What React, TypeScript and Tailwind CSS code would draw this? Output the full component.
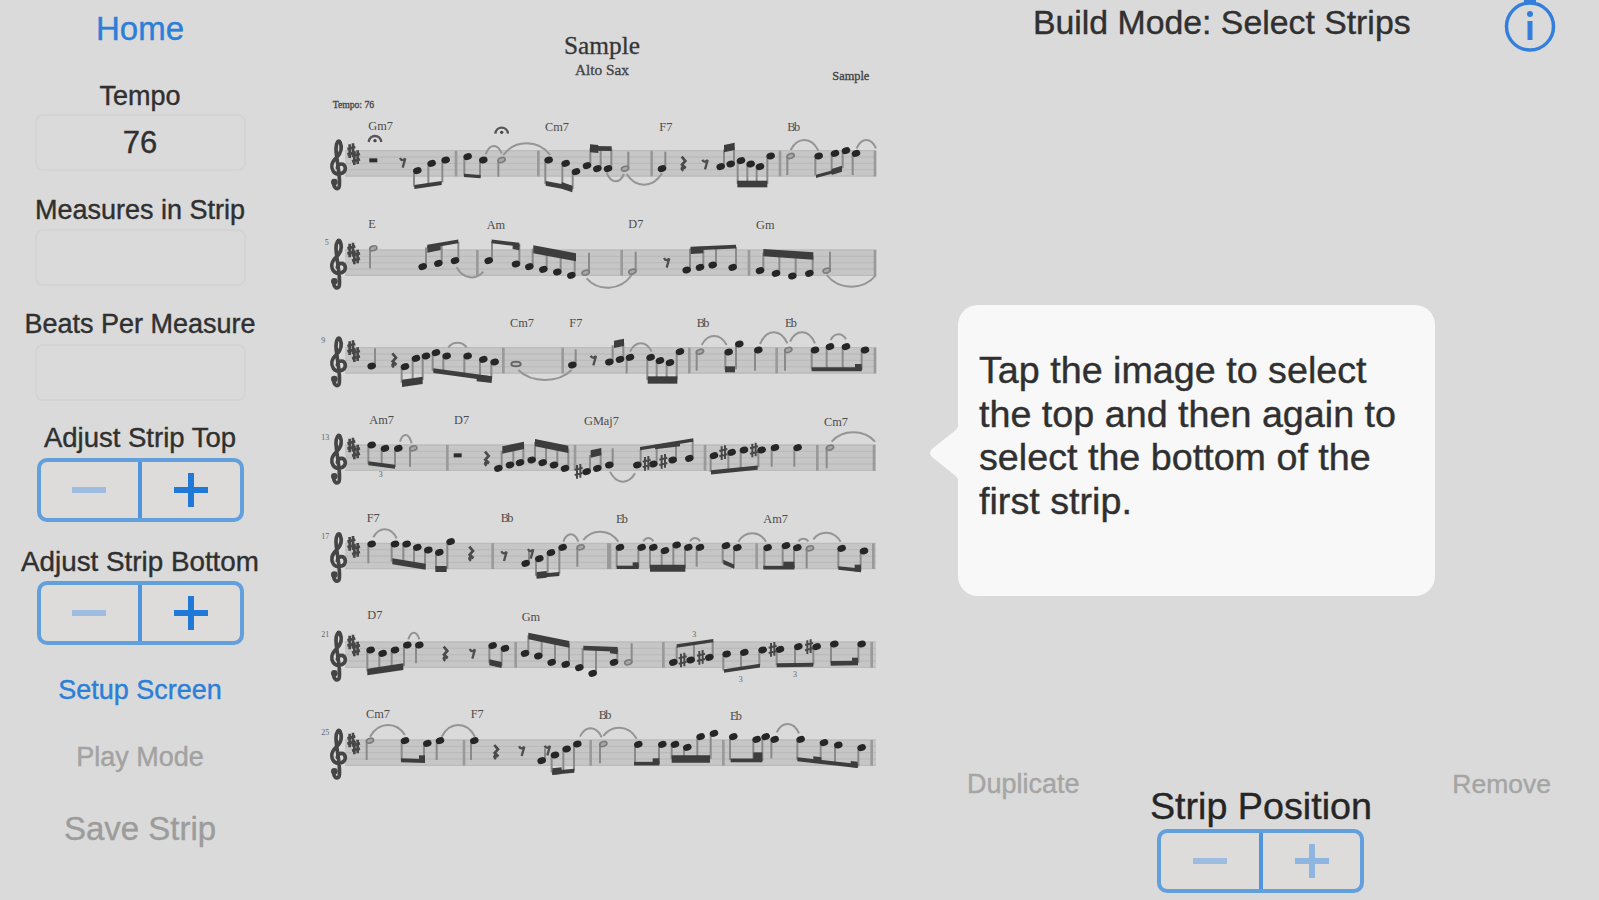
import clsx from "clsx"

type Note = [x: number, y: number]
type Beam = [x1: number, y1: number, x2: number, y2: number, weight: number]
type Tie = [x1: number, y1: number, x2: number, y2: number, peak: number]

interface Passage {
    x: number;
    y: number;
    groups?: { beam: Beam; notes: Note[] }[];
    extraBeams?: Beam[];
    quarters?: [x: number, y: number, stemTo: number][];
    halves?: [x: number, y: number, stemTo: number][];
    wholes?: Note[];
    ties?: Tie[];
    bars?: number[];
    quarterRests?: Note[];
    eighthRests?: Note[];
    wholeRests?: Note[];
    sharps?: Note[];
    fermatas?: Note[];
    triplets?: Note[];
    chords?: [x: number, y: number, name: string][];
}

// y of the top line of each staff
const staves = [392, 690, 983, 1275, 1570, 1866, 2160]

// two passages per staff, left half then right half
const passages: Passage[] = [
    {
        x: 0, y: 0,
        groups: [
            { beam: [283, 501, 365, 489, 12], notes: [[292, 452], [335, 430], [377, 420]] },
            { beam: [432, 466, 482, 470, 10], notes: [[443, 410], [490, 420]] },
            { beam: [677, 490, 757, 505, 14], notes: [[686, 420], [737, 430], [768, 455]] },
            { beam: [810, 385, 875, 386, 14], notes: [[801, 437], [832, 446], [864, 446]] },
        ],
        extraBeams: [[725, 496, 757, 507, 20], [810, 385, 835, 387, 24]],
        halves: [[545, 420, 470]],
        ties: [[497, 403, 545, 400, 378], [550, 405, 690, 405, 370]],
        bars: [408, 655],
        wholeRests: [[160, 421]],
        eighthRests: [[248, 425]],
        fermatas: [[165, 362], [545, 337]],
        chords: [[145, 330, "Gm7"], [675, 332, "Cm7"]],
    },
    {
        x: 840, y: 0,
        groups: [
            { beam: [372, 386, 404, 379, 22], notes: [[362, 440], [392, 432]] },
            { beam: [412, 492, 502, 492, 20], notes: [[423, 422], [452, 432], [480, 440], [512, 408]] },
            { beam: [648, 469, 726, 448, 10], notes: [[656, 408], [705, 400], [738, 392]] },
        ],
        extraBeams: [[695, 456, 726, 446, 18]],
        quarters: [[186, 446, 395], [768, 400, 465]],
        halves: [[75, 446, 395], [572, 408, 465]],
        ties: [[20, 458, 72, 462, 484], [80, 462, 186, 460, 494], [572, 390, 655, 392, 360], [770, 385, 828, 385, 360]],
        bars: [155, 540, 825],
        quarterRests: [[250, 430]],
        eighthRests: [[315, 430]],
        chords: [[178, 332, "F7"], [562, 332, "Bb"]],
    },
    {
        x: 0, y: 0,
        groups: [
            { beam: [322, 680, 415, 664, 11], notes: [[308, 740], [355, 730], [405, 722]] },
            { beam: [515, 664, 598, 674, 11], notes: [[506, 722], [588, 732]] },
            { beam: [640, 688, 768, 712, 24], notes: [[628, 740], [670, 748], [712, 756], [754, 766]] },
        ],
        extraBeams: [[322, 688, 362, 680, 20], [578, 678, 598, 682, 18]],
        halves: [[160, 685, 745], [797, 758, 698]],
        ties: [[410, 742, 490, 755, 772], [800, 775, 935, 765, 803]],
        bars: [472],
        chords: [[145, 625, "E"], [500, 627, "Am"]],
    },
    {
        x: 840, y: 0,
        groups: [
            { beam: [272, 686, 408, 680, 11], notes: [[260, 750], [300, 742], [338, 735], [398, 742]] },
            { beam: [490, 698, 640, 708, 22], notes: [[480, 752], [528, 760], [577, 768], [628, 760]] },
        ],
        extraBeams: [[272, 692, 310, 690, 20]],
        halves: [[97, 755, 695], [680, 752, 695]],
        ties: [[680, 765, 828, 765, 800]],
        bars: [65, 447, 825],
        eighthRests: [[200, 725]],
        chords: [[85, 625, "D7"], [468, 627, "Gm"]],
    },
    {
        x: 0, y: 840,
        groups: [
            { beam: [246, 250, 308, 241, 22], notes: [[255, 200], [288, 175], [318, 168]] },
            { beam: [340, 212, 515, 236, 14], notes: [[348, 158], [380, 168], [443, 168], [490, 178], [524, 186]] },
        ],
        extraBeams: [[470, 234, 515, 239, 20]],
        quarters: [[155, 198, 145], [757, 195, 148]],
        wholes: [[588, 192]],
        ties: [[385, 142, 440, 142, 128], [595, 210, 755, 210, 240]],
        bars: [550, 728],
        quarterRests: [[222, 180]],
        eighthRests: [[820, 178]],
        chords: [[570, 80, "Cm7"], [748, 80, "F7"]],
    },
    {
        x: 840, y: 840,
        groups: [
            { beam: [42, 133, 72, 127, 22], notes: [[28, 186], [60, 178]] },
            { beam: [143, 240, 232, 240, 22], notes: [[152, 172], [180, 182], [210, 188], [240, 155]] },
            { beam: [375, 208, 405, 208, 18], notes: [[386, 156], [418, 132]] },
            { beam: [635, 208, 785, 208, 12], notes: [[645, 150], [690, 140], [738, 140], [795, 150]] },
        ],
        extraBeams: [[765, 202, 785, 202, 20]],
        quarters: [[90, 172, 220], [475, 150, 212]],
        halves: [[300, 155, 212], [565, 150, 212]],
        ties: [[90, 155, 155, 155, 130], [305, 135, 380, 135, 108], [480, 132, 562, 130, 97], [570, 125, 645, 130, 97], [692, 120, 738, 118, 103]],
        bars: [268, 530, 825],
        chords: [[290, 82, "Bb"], [555, 82, "Eb"]],
    },
    {
        x: 0, y: 840,
        groups: [
            { beam: [145, 490, 225, 500, 12], notes: [[155, 435], [195, 445], [235, 445]] },
            { beam: [547, 450, 612, 436, 22], notes: [[535, 505], [570, 495], [600, 488]] },
            { beam: [645, 428, 745, 448, 22], notes: [[635, 480], [668, 488], [702, 495], [735, 505]] },
            { beam: [812, 462, 844, 455, 22], notes: [[800, 515], [832, 505]] },
        ],
        halves: [[280, 445, 500]],
        ties: [[240, 425, 275, 430, 405]],
        bars: [382, 765],
        wholeRests: [[413, 466]],
        quarterRests: [[500, 475]],
        sharps: [[776, 514]],
        triplets: [[182, 530]],
        chords: [[148, 372, "Am7"], [402, 372, "D7"], [792, 375, "GMaj7"]],
    },
    {
        x: 840, y: 840,
        groups: [
            { beam: [120, 446, 280, 420, 10], notes: [[112, 495], [160, 492], [218, 480], [268, 475]] },
            { beam: [333, 517, 473, 503, 13], notes: [[342, 467], [395, 457], [432, 450], [485, 450]] },
        ],
        extraBeams: [[165, 441, 240, 432, 14]],
        quarters: [[28, 495, 445], [525, 443, 500], [593, 443, 500]],
        halves: [[690, 443, 505]],
        ties: [[30, 515, 105, 520, 545], [695, 425, 825, 425, 397]],
        bars: [315, 652, 822],
        sharps: [[140, 490], [190, 484], [370, 458], [462, 450]],
        chords: [[672, 378, "Cm7"]],
    },
    {
        x: 0, y: 1440,
        groups: [
            { beam: [217, 184, 317, 200, 18], notes: [[225, 132], [260, 132], [292, 142], [325, 150]] },
            { beam: [346, 207, 380, 207, 18], notes: [[358, 157], [392, 125]] },
            { beam: [650, 228, 718, 222, 12], notes: [[658, 176], [693, 158], [728, 142]] },
        ],
        extraBeams: [[650, 226, 680, 223, 20]],
        quarters: [[155, 132, 190], [617, 190, 150]],
        halves: [[782, 142, 200]],
        ties: [[160, 112, 230, 115, 88], [730, 125, 775, 125, 103], [790, 120, 895, 125, 95]],
        bars: [518, 865],
        quarterRests: [[453, 160]],
        eighthRests: [[552, 165], [632, 158]],
        chords: [[140, 65, "F7"], [542, 67, "Bb"]],
    },
    {
        x: 840, y: 1440,
        groups: [
            { beam: [50, 202, 116, 202, 10], notes: [[60, 142], [125, 142]] },
            { beam: [150, 205, 256, 205, 21], notes: [[160, 142], [195, 152], [230, 135], [265, 142]] },
            { beam: [370, 186, 402, 200, 13], notes: [[378, 137], [412, 143]] },
            { beam: [490, 203, 583, 203, 11], notes: [[503, 143], [558, 137], [592, 143]] },
            { beam: [715, 204, 783, 211, 11], notes: [[725, 145], [792, 153]] },
        ],
        extraBeams: [[98, 195, 116, 195, 16], [550, 195, 583, 195, 20], [764, 204, 783, 204, 20]],
        quarters: [[300, 142, 200]],
        halves: [[630, 145, 205]],
        ties: [[130, 124, 160, 124, 114], [270, 124, 300, 124, 114], [415, 125, 498, 125, 100], [595, 124, 625, 124, 116], [640, 118, 722, 125, 98]],
        bars: [30, 470, 820],
        chords: [[48, 70, "Eb"], [490, 70, "Am7"]],
    },
    {
        x: 0, y: 1440,
        groups: [
            { beam: [142, 516, 250, 500, 20], notes: [[152, 450], [188, 460], [225, 450], [262, 435]] },
            { beam: [508, 487, 545, 495, 18], notes: [[518, 437], [555, 445]] },
            { beam: [625, 408, 748, 433, 20], notes: [[615, 460], [655, 468], [695, 487], [737, 493]] },
            { beam: [790, 444, 893, 448, 14], notes: [[778, 503], [818, 520], [882, 487]] },
        ],
        extraBeams: [[870, 452, 893, 455, 16]],
        quarters: [[298, 435, 490]],
        ties: [[265, 418, 298, 418, 398]],
        bars: [587],
        quarterRests: [[376, 460]],
        eighthRests: [[457, 458]],
        chords: [[142, 357, "D7"], [605, 362, "Gm"]],
    },
    {
        x: 840, y: 1440,
        groups: [
            { beam: [230, 438, 340, 422, 10], notes: [[220, 487], [272, 480], [328, 472]] },
            { beam: [372, 513, 480, 497, 11], notes: [[380, 462], [433, 457], [488, 450]] },
            { beam: [530, 496, 640, 494, 12], notes: [[540, 448], [595, 440], [650, 440]] },
            { beam: [692, 490, 774, 489, 14], notes: [[703, 432], [785, 432]] },
        ],
        extraBeams: [[756, 483, 774, 483, 20]],
        halves: [[85, 487, 430]],
        bars: [190, 815],
        sharps: [[248, 480], [303, 472], [518, 448], [627, 440]],
        triplets: [[283, 412], [422, 545], [585, 532]],
    },
    {
        x: 0, y: 1440,
        groups: [
            { beam: [243, 781, 315, 783, 12], notes: [[255, 722], [322, 730]] },
            { beam: [697, 818, 763, 812, 12], notes: [[705, 765], [740, 747], [772, 732]] },
        ],
        extraBeams: [[297, 775, 315, 775, 18], [697, 815, 725, 812, 20]],
        quarters: [[360, 722, 780], [463, 722, 780], [665, 782, 745]],
        halves: [[150, 722, 780], [850, 732, 790]],
        ties: [[150, 710, 255, 705, 675], [365, 710, 465, 710, 675], [780, 710, 845, 712, 685], [850, 708, 950, 716, 683]],
        bars: [432, 812],
        quarterRests: [[528, 755]],
        eighthRests: [[605, 750], [682, 748]],
        chords: [[138, 655, "Cm7"], [452, 655, "F7"], [836, 658, "Bb"]],
    },
    {
        x: 840, y: 1440,
        groups: [
            { beam: [102, 791, 178, 791, 11], notes: [[115, 733], [187, 733]] },
            { beam: [215, 777, 330, 777, 22], notes: [[225, 733], [262, 742], [302, 710], [342, 700]] },
            { beam: [392, 781, 487, 781, 11], notes: [[400, 710], [470, 718], [497, 710]] },
            { beam: [592, 778, 773, 798, 12], notes: [[602, 718], [672, 728], [715, 735], [785, 743]] },
        ],
        extraBeams: [[158, 784, 178, 784, 18], [460, 770, 487, 770, 26], [640, 777, 664, 780, 16], [752, 792, 773, 794, 18]],
        quarters: [[524, 718, 775]],
        ties: [[530, 697, 597, 700, 672]],
        bars: [370, 815],
        chords: [[390, 660, "Eb"]],
    },
]

function Stem({ x, y, to }: { x: number; y: number; to: number }) {
    const stemX = to > y ? x - 10 : x + 10
    return <line x1={stemX} x2={stemX} y1={y} y2={to} stroke="#8a8a8a" strokeWidth="6" />
}

function NoteHead({ x, y, hollow }: { x: number; y: number; hollow?: boolean }) {
    return (
        <ellipse
            cx={x} cy={y} rx={hollow ? 11 : 13} ry={hollow ? 7 : 10}
            transform={`rotate(-18 ${x} ${y})`}
            fill={hollow ? "#a8a8a8" : "#262626"}
            stroke={hollow ? "#7c7c7c" : "none"}
            strokeWidth="5"
        />
    )
}

function Sharp({ x, y, bold }: { x: number; y: number; bold?: boolean }) {
    return (
        <path
            transform={`translate(${x} ${y})`}
            d="M-5 -19V22M5 -22V19M-12 -5L12 -11M-12 11L12 5"
            stroke="#484848" strokeWidth={bold ? 8 : 6} fill="none"
        />
    )
}

function Clef({ y }: { y: number }) {
    return (
        <g transform={`translate(0 ${y})`} fill="none" strokeLinecap="round">
            <path
                d="M57 110C50 120 38 108 42 92M58 106C62 78 48 20 48 -6C48 -24 56 -34 60 -26C68 -8 62 8 50 20C34 34 32 50 40 62C50 76 76 70 76 52C74 36 54 36 52 52"
                stroke="#454545" strokeWidth="11"
            />
            <circle cx="43" cy="94" r="10" fill="#454545" />
        </g>
    )
}

function Notation({ p, staffTop }: { p: Passage; staffTop: number }) {
    const beams = [...(p.groups ?? []).map((g) => g.beam), ...(p.extraBeams ?? [])]
    const top = staffTop - p.y

    return (
        <g transform={`translate(${p.x} ${p.y})`}>
            {p.bars?.map((x) => (
                <line key={x} x1={x} x2={x} y1={top} y2={top + 77} stroke="#9a9a9a" strokeWidth="8" />
            ))}
            {p.ties?.map(([x1, y1, x2, y2, peak], i) => {
                const control = peak + (peak - (y1 + y2) / 2) * 0.33
                return (
                    <path
                        key={i}
                        d={`M${x1} ${y1}C${x1 + (x2 - x1) * 0.25} ${control} ${x1 + (x2 - x1) * 0.75} ${control} ${x2} ${y2}`}
                        fill="none" stroke="#949494" strokeWidth="6"
                    />
                )
            })}
            {p.groups?.map(({ beam: [x1, y1, x2, y2], notes }, i) => (
                <g key={i}>
                    {notes.map(([x, y]) => (
                        <g key={x}>
                            <Stem x={x} y={y} to={y1 + ((x - x1) / (x2 - x1)) * (y2 - y1)} />
                            <NoteHead x={x} y={y} />
                        </g>
                    ))}
                </g>
            ))}
            {beams.map(([x1, y1, x2, y2, w], i) => (
                <polygon
                    key={i}
                    points={`${x1},${y1 - w / 2} ${x2},${y2 - w / 2} ${x2},${y2 + w / 2} ${x1},${y1 + w / 2}`}
                    fill="#3d3d3d"
                />
            ))}
            {p.quarters?.map(([x, y, to]) => (
                <g key={x}>
                    <Stem x={x} y={y} to={to} />
                    <NoteHead x={x} y={y} />
                </g>
            ))}
            {p.halves?.map(([x, y, to]) => (
                <g key={x}>
                    <Stem x={x} y={y} to={to} />
                    <NoteHead x={x} y={y} hollow />
                </g>
            ))}
            {p.wholes?.map(([x, y]) => (
                <ellipse key={x} cx={x} cy={y} rx="14" ry="7" fill="#bbb" stroke="#666" strokeWidth="6" />
            ))}
            {p.quarterRests?.map(([x, y]) => (
                <path key={x} transform={`translate(${x} ${y})`} d="M-5 -20L6 -7L-4 4L7 14C-6 8 -7 16 0 22" fill="none" stroke="#4a4a4a" strokeWidth="8" />
            ))}
            {p.eighthRests?.map(([x, y]) => (
                <path key={x} transform={`translate(${x} ${y})`} d="M-8 -11C-4 -2 4 -4 8 -10L0 18" fill="none" stroke="#4f4f4f" strokeWidth="7" />
            ))}
            {p.wholeRests?.map(([x, y]) => (
                <rect key={x} x={x - 12} y={y - 6} width="24" height="12" fill="#2e2e2e" />
            ))}
            {p.sharps?.map(([x, y]) => <Sharp key={x} x={x} y={y} />)}
            {p.fermatas?.map(([x, y]) => (
                <g key={x} transform={`translate(${x} ${y})`}>
                    <path d="M-19 4C-16 -20 16 -20 19 4" fill="none" stroke="#555" strokeWidth="7" />
                    <circle r="5" fill="#444" />
                </g>
            ))}
            {p.triplets?.map(([x, y]) => (
                <text key={x} x={x} y={y} fontSize="24" textAnchor="middle" fill="#666">3</text>
            ))}
            {p.chords?.map(([x, y, name]) => (
                <text key={x} x={x} y={y} fontSize="37" fill="#4c4c4c" letterSpacing={name.endsWith("b") ? -5 : 0}>{name}</text>
            ))}
        </g>
    )
}

function SheetMusic() {
    return (
        <svg className="mt-5 ml-8 h-[800px] w-[576px] shrink-0 font-['Liberation_Serif',serif]" viewBox="-24 0 1728 2400">
            <g stroke="#444" strokeWidth="1">
                <text x="846" y="102" fontSize="76" textAnchor="middle" fill="#333">Sample</text>
                <text x="846" y="164" fontSize="46" textAnchor="middle" fill="#444">Alto Sax</text>
                <text x="1648" y="179" fontSize="37" textAnchor="end" fill="#444">Sample</text>
                <text x="38" y="265" fontSize="29" fill="#4c4c4c">Tempo: 76</text>
            </g>
            {staves.map((y, i) => (
                <g key={y}>
                    <rect x="75" y={y} width="1593" height="77" fill="#c6c6c6" />
                    {[0, 1, 2, 3, 4].map((n) => (
                        <line key={n} x1="75" x2="1668" y1={y + n * 19} y2={y + n * 19} stroke="#bbb" strokeWidth="4" />
                    ))}
                    <Clef y={y} />
                    <Sharp x={94} y={y} bold />
                    <Sharp x={108} y={y + 21} bold />
                    {i > 0 && (
                        <text x={i === 1 ? 14 : 4} y={y - 14} fontSize="24" fill="#666">{[0, 5, 9, 13, 17, 21, 25][i]}</text>
                    )}
                </g>
            ))}
            {passages.map((p, i) => <Notation key={i} p={p} staffTop={staves[Math.floor(i / 2)]} />)}
        </svg>
    )
}

function Stepper({ plusActive = false, className }: { plusActive?: boolean; className?: string }) {
    return (
        <div className={clsx("flex h-16 w-[207px] shrink-0 rounded-[10px] border-4 border-[#629fdd] bg-[#dddcda]", className)}>
            <button className="flex flex-1 items-center justify-center border-r-2 border-[#4f94dc]">
                <svg className="size-[34px] text-[#9dbce0]" viewBox="0 0 34 34">
                    <path d="M0 17H34" stroke="currentColor" strokeWidth="6" />
                </svg>
            </button>
            <button className="flex flex-1 items-center justify-center border-l-2 border-[#4f94dc]">
                <svg className={clsx("size-[34px]", plusActive ? "text-[#2079d6]" : "text-[#8fb5e1]")} viewBox="0 0 34 34">
                    <path d="M0 17H34M17 0V34" stroke="currentColor" strokeWidth="6" />
                </svg>
            </button>
        </div>
    )
}

function Field({ value, className }: { value?: string; className?: string }) {
    return (
        <div className={clsx("flex h-[57px] w-[211px] shrink-0 items-center justify-center rounded-lg border-2 border-[#d4d4d4] text-[31px]", className)}>
            {value}
        </div>
    )
}

function Sidebar() {
    return (
        <aside className="flex w-[280px] shrink-0 flex-col items-center text-[27px] leading-8 whitespace-nowrap">
            <button className="mt-[13px] text-[33px] text-[#2b7fd8]">Home</button>
            <label className="mt-[35px]">Tempo</label>
            <Field value="76" className="mt-[2px]" />
            <label className="mt-[23px]">Measures in Strip</label>
            <Field className="mt-[3px]" />
            <label className="mt-[22px]">Beats Per Measure</label>
            <Field className="mt-[4px]" />
            <label className="mt-[21px] text-[27.5px]">Adjust Strip Top</label>
            <Stepper plusActive className="mt-[4px]" />
            <label className="mt-6 text-[27.8px]">Adjust Strip Bottom</label>
            <Stepper plusActive className="mt-[3px]" />
            <button className="mt-[29px] text-[#2b7fd8]">Setup Screen</button>
            <button className="mt-[35px] text-[#a2a2a2]">Play Mode</button>
            <button className="mt-10 text-[33px] text-[#9c9c9c]">Save Strip</button>
        </aside>
    )
}

export default function App() {
    return (
        <div className="flex h-[900px] w-[1599px] overflow-hidden bg-[#dadada] font-['Liberation_Sans',sans-serif] text-[#303030] [-webkit-text-stroke:0.4px]">
            <Sidebar />
            <SheetMusic />

            <section className="flex flex-1 flex-col">
                <header className="flex h-[52px] items-start justify-between pr-[43px] pl-[145px]">
                    <h1 className="mt-[2px] text-[33.8px] leading-10 whitespace-nowrap">Build Mode: Select Strips</h1>
                    <svg className="h-[53px] w-[52px]" viewBox="0 0 52 53" fill="none" stroke="#337fdb" strokeWidth="3.5">
                        <circle cx="26" cy="26.5" r="23.5" />
                        <path d="M26 21V40" strokeWidth="5" />
                        <circle cx="26" cy="14" r="3" fill="#337fdb" stroke="none" />
                        <path d="M20 1H32" />
                    </svg>
                </header>

                <div className="relative mt-[253px] ml-[70px] h-[291px] w-[477px] rounded-[20px] bg-[#f8f8f8] pt-[44px] pl-[21px]">
                    <svg className="absolute top-[119px] -left-[29px] h-[58px] w-[30px]" viewBox="0 0 30 58">
                        <path d="M30 0Q29 5 23 9L3 25Q-1 29 3 33L23 49Q29 53 30 58Z" fill="#f8f8f8" />
                    </svg>
                    <p className="text-[37.7px] leading-[43.7px] whitespace-nowrap">
                        Tap the image to select<br />
                        the top and then again to<br />
                        select the bottom of the<br />
                        first strip.
                    </p>
                </div>

                <div className="mt-[172px] flex items-start justify-between pr-[48px] pl-[79px] text-[27px] leading-8 text-[#a5a5a5]">
                    <button>Duplicate</button>
                    <div className="-ml-[10px] flex flex-col items-center text-[#262626]">
                        <span className="mt-[18px] text-[37.7px] leading-10">Strip Position</span>
                        <Stepper className="mt-[3px]" />
                    </div>
                    <button className="text-[26.5px]">Remove</button>
                </div>
            </section>
        </div>
    )
}
